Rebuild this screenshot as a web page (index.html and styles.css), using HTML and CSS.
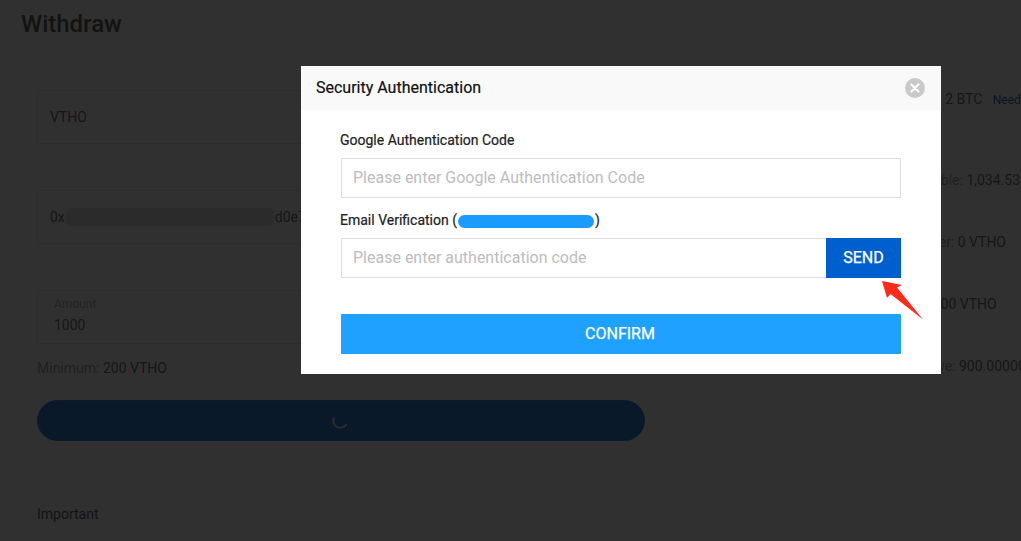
FILE: index.html
```html
<!DOCTYPE html>
<html lang="en">
<head>
<meta charset="utf-8">
<title>Withdraw</title>
<link rel="stylesheet" href="styles.css">
</head>
<body>
<main class="page">
  <h1 class="title">Withdraw</h1>
  <div class="columns">
    <section class="form">
      <div class="field">VTHO</div>
      <div class="field">0x<span class="smudge"></span>d0e7</div>
      <div class="field field-amount">
        <span class="field-label">Amount</span>
        <span>1000</span>
      </div>
      <p class="minimum"><span class="muted">Minimum:</span> 200 VTHO</p>
      <div class="submit">
        <svg class="spinner" width="18" height="18" viewBox="0 0 18 18" aria-hidden="true"><path d="M3 5.500A7 7 0 1 0 15.500 12" fill="none" stroke="#f0f0f0" stroke-width="1.800"/></svg>
      </div>
      <h2 class="important">Important</h2>
    </section>
    <aside class="summary">
      <div class="row row-limit"><span class="muted">Withdraw Limit:</span> 2 BTC <a class="link">Need</a></div>
      <div class="row row-avail"><span class="muted">Balance Available:</span> 1,034.53</div>
      <div class="row row-fee"><span class="muted">Fee per Transfer:</span> 0 VTHO</div>
      <div class="row row-total"><span class="muted">Total Amount:</span> 1,000 VTHO</div>
      <div class="row row-receive"><span class="muted">Amount to Receive:</span> 900.00000</div>
    </aside>
  </div>
</main>
<div class="overlay"></div>
<div class="modal">
  <header class="modal-head">
    <h2 class="modal-title">Security Authentication</h2>
    <button class="close" aria-label="Close">
      <svg width="10" height="10" viewBox="0 0 10 10" aria-hidden="true"><path d="M1.500 1.500l7 7M8.500 1.500l-7 7" stroke="#fff" stroke-width="2.200" stroke-linecap="round"/></svg>
    </button>
  </header>
  <div class="modal-body">
    <label class="label">Google Authentication Code</label>
    <input class="input" placeholder="Please enter Google Authentication Code">
    <label class="label label-email">Email Verification (<span class="scribble"></span>)</label>
    <div class="send-row">
      <input class="input input-send" placeholder="Please enter authentication code">
      <button class="send">SEND</button>
    </div>
    <button class="confirm">CONFIRM</button>
  </div>
</div>
<svg class="arrow" width="45" height="42" viewBox="0 0 45 42" aria-hidden="true"><polygon points="1,1 21,5 16,7.500 42,39.500 9.500,14 6,18" fill="#ff2a17"/></svg>
</body>
</html>
```
FILE: styles.css
```css
* { box-sizing: border-box; }
html, body { margin: 0; height: 541px; overflow: hidden; }
body { background: #fff; color: #777; font-family: Roboto, "Liberation Sans", sans-serif; font-size: 14px; position: relative; }
.page { padding-left: 21px; width: 1021px; overflow: hidden; }
.title { margin: 0; font-size: 24px; font-weight: 500; line-height: 48px; color: #666; }
.columns { display: flex; margin-top: 42px; padding-left: 16px; gap: 173px; }
.form { width: 608px; flex: none; }
.field { height: 54px; margin-bottom: 46px; padding: 0 12px; border: 1px solid #e8e8e8; border-radius: 3px; display: flex; align-items: center; white-space: nowrap; overflow: hidden; }
.smudge { display: inline-block; width: 208px; height: 18px; border-radius: 6px; background: #e4e4e4; margin: 0 1px; }
.field-amount { margin-bottom: 0; padding: 5px 16px; flex-direction: column; align-items: flex-start; justify-content: flex-start; }
.field-label { font-size: 12px; line-height: 16px; color: #bbb; margin-bottom: 5px; }
.minimum { margin: 14px 0 0; line-height: 20px; }
.muted { color: #aaa; }
.submit { margin-top: 22px; height: 41px; border-radius: 21px; background: #3585da; display: flex; align-items: center; justify-content: center; padding-right: 2px; border: 1px solid #3f8de0; }
.important { margin: 63px 0 0; font-size: 14px; font-weight: 400; line-height: 20px; color: #666; }
.summary { flex: none; width: 320px; height: 313px; padding-left: 12px; white-space: nowrap; border-left: 1px solid #f3f3f3; border-bottom: 1px solid #f3f3f3; display: flex; flex-direction: column; gap: 44px; }
.row { line-height: 18px; }
.row-limit { margin-bottom: 18px; margin-left: 14px; }
.row-avail { margin-left: 19px; }
.row-fee { margin-left: 19px; }
.row-total { margin-left: 0; }
.row-receive { margin-left: 4px; }
.link { color: #3f6fa8; font-size: 12px; margin-left: 7px; }
.overlay { position: absolute; inset: 0; background: rgba(0, 0, 0, .81); }
.modal { position: absolute; left: 301px; top: 66px; width: 640px; height: 308px; background: #fff; color: #333; }
.modal-head { height: 44px; background: #f9f9f9; display: flex; align-items: center; justify-content: space-between; padding: 0 16px 0 15px; }
.modal-title { margin: 0 0 1px; font-size: 16px; font-weight: 400; color: #111; -webkit-text-stroke: .2px #111; }
.close { width: 20px; height: 20px; padding: 0; border: 0; border-radius: 50%; background: #c9c9c9; display: flex; align-items: center; justify-content: center; }
.modal-body { padding: 20px 40px; display: flex; flex-direction: column; }
.label { line-height: 20px; font-size: 14px; font-weight: 400; color: #222; margin-left: -1px; -webkit-text-stroke: .2px #222; }
.input { height: 40px; width: 100%; margin-top: 8px; padding: 0 11px 2px; border: 1px solid #ddd; border-radius: 0; outline: 0; font-family: inherit; font-size: 16px; color: #333; background: #fff; }
.input::placeholder { color: #bdbdbd; opacity: 1; }
.label-email { margin-top: 12px; display: flex; align-items: center; }
.scribble { display: inline-block; width: 136px; height: 13px; border-radius: 7px; background: #1a9bff; margin: 2px 1px 0; }
.send-row { display: flex; margin-top: 8px; }
.input-send { margin-top: 0; flex: 1; min-width: 0; border-right: 0; }
.send { flex: none; width: 75px; height: 40px; border: 0; padding: 0 0 2px; background: #005fcf; color: #fff; font-family: inherit; font-size: 16px; font-weight: 400; -webkit-text-stroke: .25px #fff; }
.confirm { margin-top: 36px; height: 40px; border: 0; border-radius: 1px; background: #1fa1ff; color: #fff; font-family: inherit; font-size: 16px; font-weight: 400; padding: 0 2px 2px 0; -webkit-text-stroke: .25px #fff; }
.arrow { position: absolute; left: 881px; top: 280px; }
```
